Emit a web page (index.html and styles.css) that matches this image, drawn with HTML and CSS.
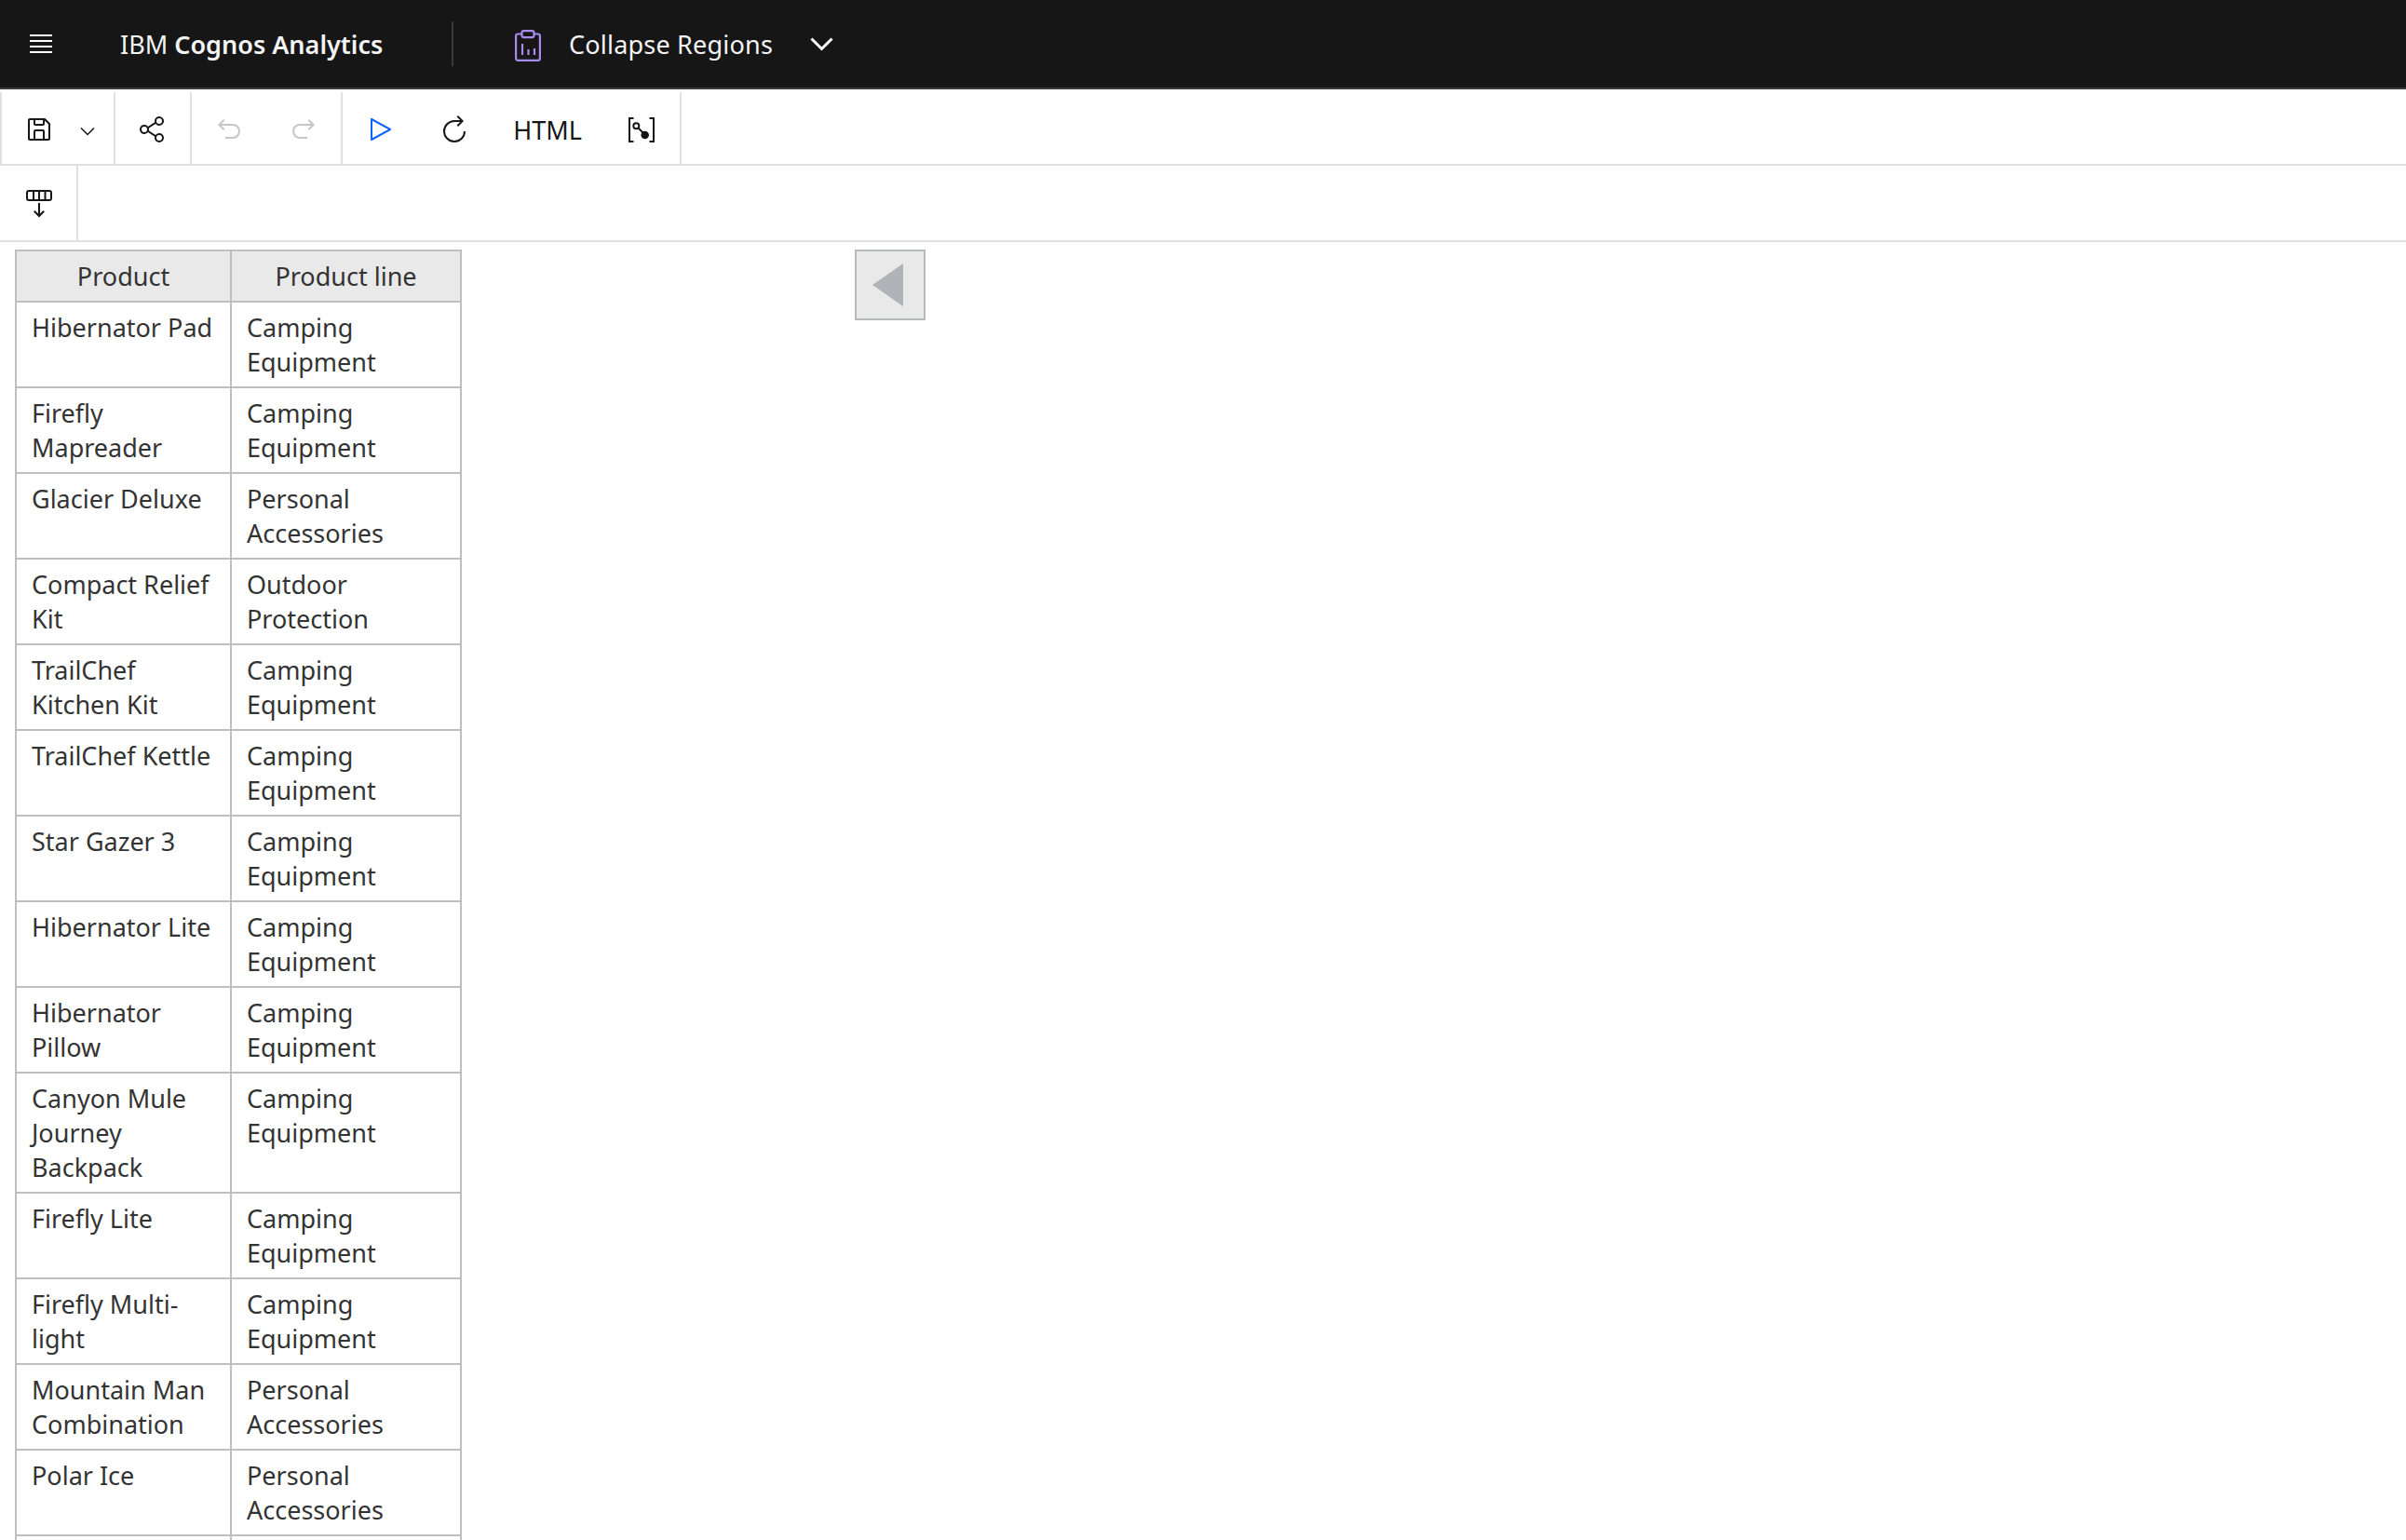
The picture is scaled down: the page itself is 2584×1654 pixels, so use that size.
FILE: index.html
```html
<!DOCTYPE html>
<html lang="en">
<head>
<meta charset="utf-8">
<title>IBM Cognos Analytics</title>
<link rel="stylesheet" href="styles.css">
</head>
<body>
<header class="masthead">
  <svg class="menu-icon" width="24" height="20" viewBox="0 0 24 20" fill="#fff"><rect y="0" width="24" height="2"/><rect y="6" width="24" height="2"/><rect y="12" width="24" height="2"/><rect y="18" width="24" height="2"/></svg>
  <div class="brand">IBM <b>Cognos Analytics</b></div>
  <div class="mast-sep"></div>
  <svg class="report-icon" width="28" height="34" viewBox="0 0 28 34" fill="none" stroke="#a98bf0" stroke-width="2.2"><path d="M7.500 4.500H3.300A2.200 2.200 0 0 0 1.100 6.700V30.700A2.200 2.200 0 0 0 3.300 32.900H24.700A2.200 2.200 0 0 0 26.900 30.700V6.700A2.200 2.200 0 0 0 24.700 4.500H20.500"/><rect x="7.500" y="1.100" width="13" height="7" rx="2"/><path d="M8 15V27M14.500 21V27M21 20V27"/></svg>
  <div class="report-name">Collapse Regions</div>
  <svg class="mast-chevron" width="25" height="15" viewBox="0 0 25 15" fill="none" stroke="#fff" stroke-width="3"><path d="M1.500 1.500L12.500 12.500L23.500 1.500"/></svg>
</header>
<nav class="toolbar">
  <div class="tool-group group-save">
    <button class="tool"><svg width="32" height="32" viewBox="0 0 32 32" fill="#161616"><path d="M27.71,9.29l-5-5A1,1,0,0,0,22,4H6A2,2,0,0,0,4,6V26a2,2,0,0,0,2,2H26a2,2,0,0,0,2-2V10A1,1,0,0,0,27.71,9.29ZM12,6h8v4H12Zm8,20H12V18h8Zm2,0V18a2,2,0,0,0-2-2H12a2,2,0,0,0-2,2v8H6V6h4v4a2,2,0,0,0,2,2h8a2,2,0,0,0,2-2V6.41l4,4V26Z"/></svg></button>
    <button class="tool tool-caret"><svg width="24" height="24" viewBox="0 0 32 32" fill="#161616"><path d="M16 22L6 12l1.400-1.400 8.600 8.600 8.600-8.600L26 12z"/></svg></button>
  </div>
  <div class="tool-group group-share">
    <button class="tool"><svg width="32" height="32" viewBox="0 0 32 32" fill="#161616"><path d="M23,20a5,5,0,0,0-3.890,1.890L11.800,17.320a4.460,4.460,0,0,0,0-2.640l7.310-4.570A5,5,0,1,0,18,7a4.790,4.790,0,0,0,.2,1.320l-7.310,4.570a5,5,0,1,0,0,6.220l7.310,4.570A4.790,4.790,0,0,0,18,25a5,5,0,1,0,5-5ZM23,4a3,3,0,1,1-3,3A3,3,0,0,1,23,4ZM7,19a3,3,0,1,1,3-3A3,3,0,0,1,7,19Zm16,9a3,3,0,1,1,3-3A3,3,0,0,1,23,28Z"/></svg></button>
  </div>
  <div class="tool-group group-history">
    <button class="tool"><svg width="32" height="32" viewBox="0 0 32 32" fill="#c6c6c6"><path d="M20,10H7.815l3.587-3.586L10,5,4,11l6,6,1.402-1.415L7.818,12H20a6,6,0,0,1,0,12H12v2h8a8,8,0,0,0,0-16Z"/></svg></button>
    <button class="tool"><svg width="32" height="32" viewBox="0 0 32 32" fill="#c6c6c6"><path d="M12,10H24.185L20.598,6.414,22,5l6,6-6,6-1.402-1.415L24.182,12H12a6,6,0,0,0,0,12h8v2H12a8,8,0,0,1,0-16Z"/></svg></button>
  </div>
  <div class="tool-group group-run">
    <button class="tool"><svg width="32" height="32" viewBox="0 0 32 32" fill="#0f62fe"><path d="M7,28a1,1,0,0,1-1-1V5a1,1,0,0,1,1.482-.876l20,11a1,1,0,0,1,0,1.752l-20,11A1,1,0,0,1,7,28ZM8,6.691V25.309L24.925,16Z"/></svg></button>
    <button class="tool"><svg width="32" height="32" viewBox="0 0 32 32" fill="#161616"><path d="M26,18A10,10,0,1,1,16,8h6.182l-3.584,3.585L20,13l6-6L20,1,18.598,2.414,22.185,6H16A12,12,0,1,0,28,18Z"/></svg></button>
    <button class="tool tool-text">HTML</button>
    <button class="tool tool-sql"><svg width="28" height="27" viewBox="0 0 28 27" fill="none" stroke="#161616" stroke-width="2"><path d="M5.500 1H1V26H5.500M22.500 1H27V26H22.500"/><circle cx="8.300" cy="9.300" r="3"/><path d="M10.500 11.500L16 17"/><circle cx="17.700" cy="19" r="3.300" fill="#161616"/></svg></button>
  </div>
</nav>
<div class="subbar">
  <button class="tool tool-sub"><svg width="32" height="32" viewBox="0 0 32 32" fill="none" stroke="#161616" stroke-width="2"><rect x="3" y="3" width="26" height="10" rx="2"/><path d="M10 3V13M16 3V13M22.500 3V13M16 16V30M10.800 24.700L16 30L21.200 24.700"/></svg></button>
</div>
<main class="report">
  <table class="list">
    <thead><tr><th class="col-a">Product</th><th class="col-b">Product line</th></tr></thead>
    <tbody>
      <tr><td>Hibernator Pad</td><td>Camping Equipment</td></tr>
      <tr><td>Firefly Mapreader</td><td>Camping Equipment</td></tr>
      <tr><td>Glacier Deluxe</td><td>Personal Accessories</td></tr>
      <tr><td>Compact Relief Kit</td><td>Outdoor Protection</td></tr>
      <tr><td>TrailChef Kitchen Kit</td><td>Camping Equipment</td></tr>
      <tr><td>TrailChef Kettle</td><td>Camping Equipment</td></tr>
      <tr><td>Star Gazer 3</td><td>Camping Equipment</td></tr>
      <tr><td>Hibernator Lite</td><td>Camping Equipment</td></tr>
      <tr><td>Hibernator Pillow</td><td>Camping Equipment</td></tr>
      <tr><td>Canyon Mule Journey Backpack</td><td>Camping Equipment</td></tr>
      <tr><td>Firefly Lite</td><td>Camping Equipment</td></tr>
      <tr><td>Firefly Multi-light</td><td>Camping Equipment</td></tr>
      <tr><td>Mountain Man Combination</td><td>Personal Accessories</td></tr>
      <tr><td>Polar Ice</td><td>Personal Accessories</td></tr>
      <tr><td>&nbsp;</td><td>&nbsp;</td></tr>
    </tbody>
  </table>
  <div class="pager"><span class="pager-arrow"></span></div>
</main>
</body>
</html>
```
FILE: styles.css
```css
* { box-sizing: border-box; }
html, body { margin: 0; height: 100%; overflow: hidden; }
body {
  display: flex;
  flex-direction: column;
  height: 1654px;
  background: #fff;
  color: #161616;
  font-family: "Noto Sans", "Open Sans", sans-serif;
  font-size: 27px;
}
.masthead {
  flex: none;
  height: 96px;
  display: flex;
  align-items: center;
  padding-left: 32px;
  background: #161616;
  border-bottom: 2px solid #3d3d3d;
  color: #f4f4f4;
}
.menu-icon { flex: none; margin-right: 73px; }
.brand { width: 356px; white-space: nowrap; }
.brand b { font-weight: 600; }
.mast-sep { flex: none; width: 2px; height: 48px; background: #393939; margin-right: 66px; }
.report-icon { flex: none; margin-top: 4px; margin-right: 30px; }
.report-name { width: 259px; white-space: nowrap; letter-spacing: 0.2px; }
.toolbar {
  flex: none;
  height: 82px;
  display: flex;
  padding-top: 3px;
  border-bottom: 2px solid #e0e0e0;
}
.tool-group {
  display: flex;
  align-items: center;
  height: 77px;
  padding-top: 3px;
  border-left: 2px solid #e0e0e0;
}
.tool {
  flex: none;
  display: flex;
  align-items: center;
  justify-content: center;
  padding: 0;
  border: 0;
  background: none;
  width: 80px;
  height: 100%;
  font: inherit;
  color: #161616;
}
.group-save { width: 122px; }
.group-save .tool-caret { width: 24px; margin-top: 4px; }
.group-share { width: 82px; }
.group-history { width: 162px; }
.group-run { width: 366px; border-right: 2px solid #e0e0e0; }
.tool-text { width: 120px; }
.tool-sql { width: 82px; }
.subbar {
  flex: none;
  height: 82px;
  border-bottom: 2px solid #e0e0e0;
}
.tool-sub {
  width: 84px;
  padding-left: 2px;
  border-right: 2px solid #e0e0e0;
}
.report {
  flex: 1;
  min-height: 0;
  display: flex;
  align-items: flex-start;
  gap: 422px;
  padding: 8px 0 0 16px;
  overflow: hidden;
}
.list {
  flex: none;
  border-collapse: collapse;
  table-layout: fixed;
  width: 478px;
  color: #333;
  line-height: 37px;
}
.list th, .list td {
  border: 2px solid #bfbfbf;
  padding: 8px 16px;
  vertical-align: top;
  text-align: left;
}
.list th {
  background: #e9e9e9;
  font-weight: 400;
  text-align: center;
}
.col-a { width: 231px; }
.col-b { width: 247px; }
.pager {
  flex: none;
  width: 76px;
  height: 76px;
  display: flex;
  align-items: center;
  justify-content: center;
  padding-right: 6px;
  background: #e9e9e9;
  border: 2px solid #b4b7bb;
}
.pager-arrow {
  width: 0;
  height: 0;
  border-style: solid;
  border-width: 23px 33px 23px 0;
  border-color: transparent #b0b3b7 transparent transparent;
}
```
